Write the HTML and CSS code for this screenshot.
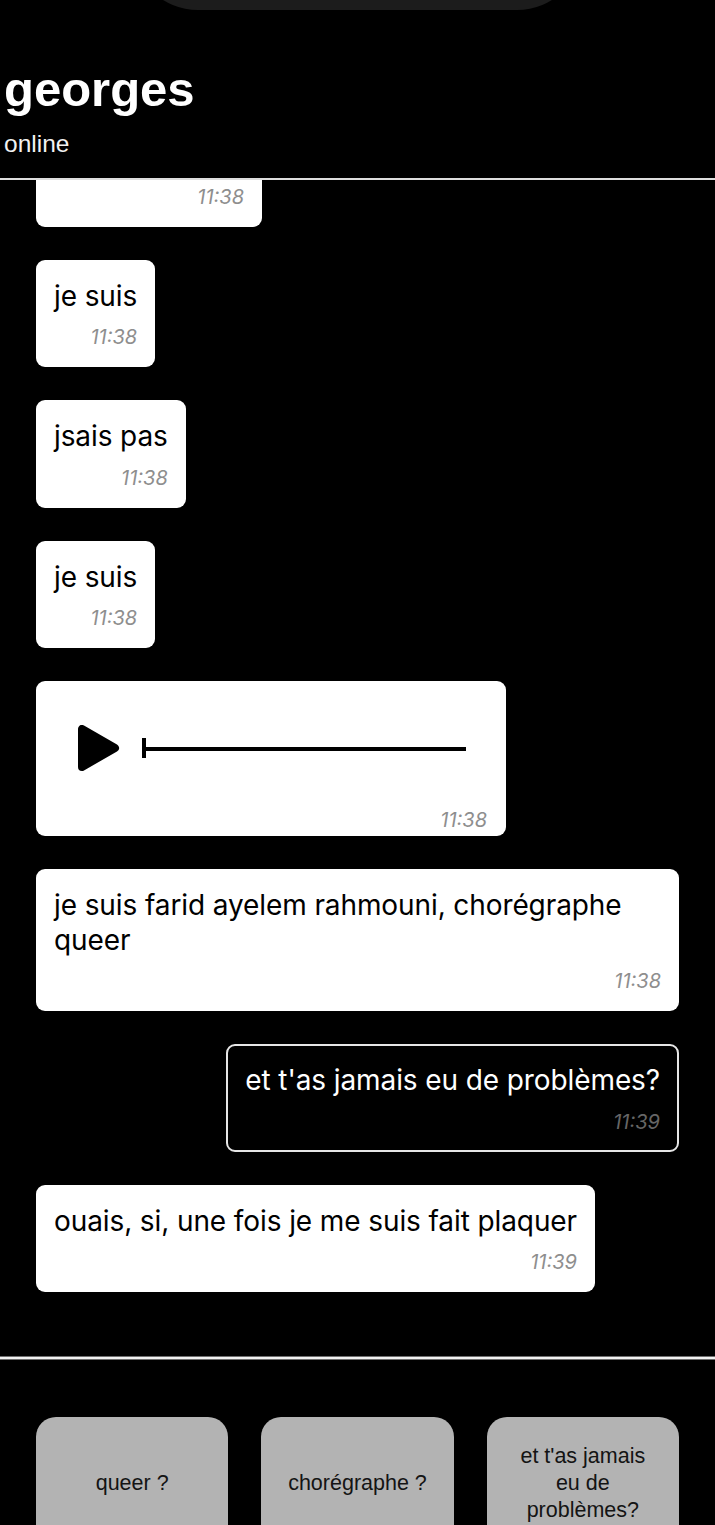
FILE: index.html
```html
<!DOCTYPE html>
<html lang="fr">
<head>
<meta charset="utf-8">
<title>georges</title>
<link rel="stylesheet" href="styles.css">
</head>
<body>
<div class="island"></div>
<header class="top">
  <h1 class="name">georges</h1>
  <div class="status">online</div>
</header>
<main class="chat">
  <div class="msg in clipped"><div class="text"></div><div class="time">11:38</div></div>
  <div class="msg in"><div class="text">je suis</div><div class="time">11:38</div></div>
  <div class="msg in"><div class="text">jsais pas</div><div class="time">11:38</div></div>
  <div class="msg in"><div class="text">je suis</div><div class="time">11:38</div></div>
  <div class="msg in audio">
    <div class="player">
      <svg class="play" width="42" height="46" viewBox="0 0 42 46"><polygon points="4,4 4,42 37,23" fill="#000" stroke="#000" stroke-width="8" stroke-linejoin="round"/></svg>
      <div class="track"><span class="tick"></span><span class="bar"></span></div>
    </div>
    <div class="time">11:38</div>
  </div>
  <div class="msg in"><div class="text">je suis farid ayelem rahmouni, chorégraphe queer</div><div class="time">11:38</div></div>
  <div class="msg out"><div class="text">et t'as jamais eu de problèmes?</div><div class="time">11:39</div></div>
  <div class="msg in"><div class="text">ouais, si, une fois je me suis fait plaquer</div><div class="time">11:39</div></div>
</main>
<div class="divider"></div>
<nav class="choices">
  <button class="choice">queer ?</button>
  <button class="choice">chorégraphe ?</button>
  <button class="choice">et t'as jamais eu de problèmes?</button>
</nav>
</body>
</html>
```
FILE: styles.css
```css
html, body {
  margin: 0;
  padding: 0;
  background: #000;
}
body {
  position: relative;
  overflow: hidden;
  height: 1525px;
}
.island {
  position: absolute;
  top: -140px;
  left: 132px;
  width: 451px;
  height: 150px;
  border-radius: 66px;
  background: #1c1c1c;
}
.top {
  padding: 60px 4px 20px;
  border-bottom: 2px solid #dedede;
  font-family: "Liberation Sans", Arial, sans-serif;
  color: #fff;
}
.name {
  margin: 0;
  font-size: 49px;
  line-height: 58px;
  font-weight: 700;
}
.status {
  margin-top: 12px;
  font-size: 24.5px;
  line-height: 28px;
  color: #f2f2f2;
}
.chat {
  height: 1176px;
  overflow: hidden;
  display: flex;
  flex-direction: column;
  justify-content: flex-end;
  gap: 33px;
  padding: 0 36px 64px;
  box-sizing: border-box;
  font-family: Inter, "Noto Sans", sans-serif;
}
.msg {
  flex: none;
  align-self: flex-start;
  max-width: 100%;
  box-sizing: border-box;
  background: #fff;
  color: #000;
  border-radius: 9px;
  padding: 19px 18px 18px;
}
.msg .text {
  font-size: 28px;
  line-height: 34.5px;
  letter-spacing: -0.1px;
}
.msg.clipped .text {
  width: 190px;
  height: 34.5px;
}
.msg .time {
  margin-top: 12px;
  font-size: 20px;
  line-height: 24px;
  font-style: italic;
  text-align: right;
  color: #8e8e8e;
}
.msg.out {
  align-self: flex-end;
  background: #000;
  color: #fff;
  border: 2px solid #e6e6e6;
  padding: 17px 17px 16px;
}
.msg.out .time {
  color: #666;
}
.msg.audio {
  width: 470px;
  padding: 19px 19px 4px;
}
.player {
  height: 96px;
  display: flex;
  align-items: center;
  padding: 0 21px 0 23px;
}
.play {
  flex: none;
  display: block;
  margin-right: 22px;
}
.track {
  flex: 1;
  display: flex;
  align-items: center;
}
.tick {
  width: 4px;
  height: 20px;
  background: #000;
}
.bar {
  flex: 1;
  height: 4px;
  background: #000;
  margin-top: 2px;
}
.divider {
  height: 4px;
  background: linear-gradient(#6e6e6e 0, #6e6e6e 1px, #f0f0f0 1px, #f0f0f0 3px, #6e6e6e 3px);
}
.choices {
  display: grid;
  grid-template-columns: repeat(3, 1fr);
  gap: 33px;
  padding: 57px 36px 0;
}
.choice {
  height: 132px;
  border: none;
  border-radius: 20px;
  background: #b3b3b3;
  color: #141414;
  font-family: "Liberation Sans", Arial, sans-serif;
  font-size: 21.5px;
  line-height: 27px;
  padding: 0 24px;
  text-align: center;
}
```
